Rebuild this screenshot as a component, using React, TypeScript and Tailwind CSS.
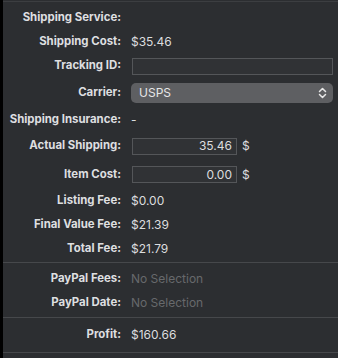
import React from "react";

const font = { fontFamily: "Inter, 'Liberation Sans', sans-serif" };

function Label({ children }: { children: React.ReactNode }) {
  return (
    <div className="w-[118px] shrink-0 text-right text-[11.4px] font-bold text-[#dedfe0]">
      {children}
    </div>
  );
}

function Row({ h, label, children }: { h: string; label: string; children?: React.ReactNode }) {
  return (
    <div className={`flex items-center ${h}`}>
      <Label>{label}</Label>
      <div className="ml-[10px] flex flex-1 items-center pr-[5px] text-[12px] text-[#dcdddf]">{children}</div>
    </div>
  );
}

function Sep({ pt, pb }: { pt: string; pb: string }) {
  return (
    <div className={`${pt} ${pb}`}>
      <div className="h-px w-full bg-[#46484b]" />
    </div>
  );
}

export default function App() {
  return (
    <div className="flex h-[358px] w-[338px] bg-black" style={font}>
      <div className="ml-[3px] flex flex-1 flex-col bg-[#2c2e31]">
        <div className="mt-px h-px bg-[#3c3e41]" />
        <div className="h-[4px]" />
        <Row h="h-[24px]" label="Shipping Service:" />
        <Row h="h-[24px]" label="Shipping Cost:">$35.46</Row>
        <Row h="h-[24px]" label="Tracking ID:">
          <div className="ml-px h-[17px] flex-1 border border-[#545659] bg-[#303235]" />
        </Row>
        <Row h="h-[30px]" label="Carrier:">
          <div className="flex h-[20px] flex-1 items-center justify-between rounded-[5px] bg-[#5e5f62] pl-[8px] pr-[6px] text-[12px] text-[#e6e6e7]">
            <span>USPS</span>
            <svg width="9" height="12" viewBox="0 0 9 12" fill="none" stroke="#e8e8e8" strokeWidth="1.5" strokeLinecap="round" strokeLinejoin="round">
              <path d="M1.5 4.5 L4.5 1.5 L7.5 4.5" />
              <path d="M1.5 7.5 L4.5 10.5 L7.5 7.5" />
            </svg>
          </div>
        </Row>
        <Row h="h-[24px]" label="Shipping Insurance:">-</Row>
        <Row h="h-[28px]" label="Actual Shipping:">
          <div className="ml-px flex h-[17px] w-[105px] items-center justify-end border border-[#545659] bg-[#303235] pr-[4px]">35.46</div>
          <span className="ml-[5px]">$</span>
        </Row>
        <Row h="h-[29px]" label="Item Cost:">
          <div className="ml-px flex h-[17px] w-[105px] items-center justify-end border border-[#545659] bg-[#303235] pr-[4px]">0.00</div>
          <span className="ml-[5px]">$</span>
        </Row>
        <Row h="h-[24px]" label="Listing Fee:">$0.00</Row>
        <Row h="h-[24px]" label="Final Value Fee:">$21.39</Row>
        <Row h="h-[24px]" label="Total Fee:">$21.79</Row>
        <Sep pt="pt-[1px]" pb="pb-[4px]" />
        <Row h="h-[24px]" label="PayPal Fees:">
          <span className="text-[#67696c]">No Selection</span>
        </Row>
        <Row h="h-[24px]" label="PayPal Date:">
          <span className="text-[#67696c]">No Selection</span>
        </Row>
        <Sep pt="pt-[2px]" pb="pb-[4px]" />
        <Row h="h-[26px]" label="Profit:">$160.66</Row>
        <Sep pt="pt-[4px]" pb="pb-0" />
      </div>
    </div>
  );
}
